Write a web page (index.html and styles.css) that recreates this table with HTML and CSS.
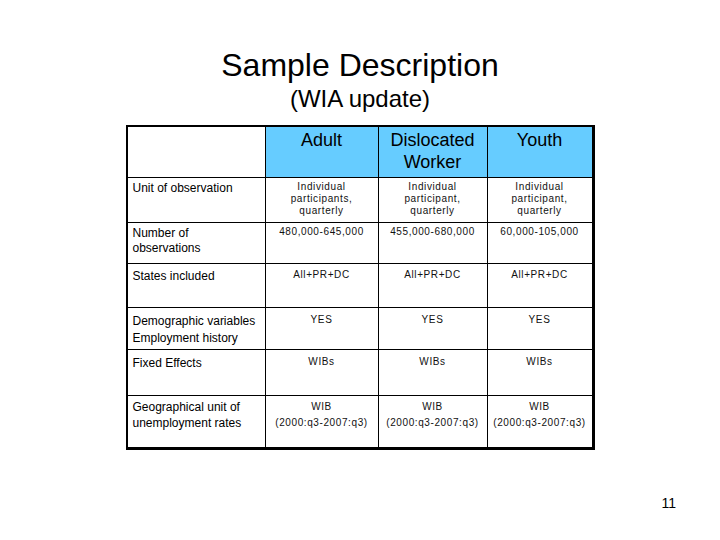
FILE: index.html
```html
<!DOCTYPE html>
<html>
<head>
<meta charset="utf-8">
<link rel="stylesheet" href="styles.css">
</head>
<body>
<div class="slide">
  <h1 class="title">Sample Description</h1>
  <div class="subtitle">(WIA update)</div>
  <div class="grid">
    <div class="cell corner"></div>
    <div class="cell head">Adult</div>
    <div class="cell head">Dislocated<br>Worker</div>
    <div class="cell head">Youth</div>

    <div class="cell label">Unit of observation</div>
    <div class="cell data">Individual<br>participants,<br>quarterly</div>
    <div class="cell data">Individual<br>participant,<br>quarterly</div>
    <div class="cell data">Individual<br>participant,<br>quarterly</div>

    <div class="cell label">Number of<br>observations</div>
    <div class="cell data">480,000-645,000</div>
    <div class="cell data">455,000-680,000</div>
    <div class="cell data">60,000-105,000</div>

    <div class="cell label r3">States included</div>
    <div class="cell data r3">All+PR+DC</div>
    <div class="cell data r3">All+PR+DC</div>
    <div class="cell data r3">All+PR+DC</div>

    <div class="cell label r4">Demographic variables<br>Employment history</div>
    <div class="cell data r4d">YES</div>
    <div class="cell data r4d">YES</div>
    <div class="cell data r4d">YES</div>

    <div class="cell label r5">Fixed Effects</div>
    <div class="cell data r5">WIBs</div>
    <div class="cell data r5">WIBs</div>
    <div class="cell data r5">WIBs</div>

    <div class="cell label r6">Geographical unit of<br>unemployment rates</div>
    <div class="cell data r6">WIB<br>(2000:q3-2007:q3)</div>
    <div class="cell data r6">WIB<br>(2000:q3-2007:q3)</div>
    <div class="cell data r6">WIB<br>(2000:q3-2007:q3)</div>
  </div>
  <div class="pagenum">11</div>
</div>
</body>
</html>
```

FILE: styles.css
```css
html, body {
  margin: 0;
  padding: 0;
  background: #ffffff;
}

.slide {
  width: 720px;
  height: 540px;
  box-sizing: border-box;
  padding-top: 47px;
  font-family: "Liberation Sans", Arial, sans-serif;
  color: #000000;
  display: flex;
  flex-direction: column;
  align-items: center;
  overflow: hidden;
}

.title {
  margin: 0;
  font-size: 32px;
  line-height: 36px;
  font-weight: normal;
  text-align: center;
}

.subtitle {
  margin-top: 2px;
  font-size: 24px;
  line-height: 28px;
  text-align: center;
}

.grid {
  margin-top: 12px;
  display: grid;
  grid-template-columns: 137px 112px 108px 104px;
  grid-template-rows: 50px 44px 40px 43px 41px 45px 51px;
  gap: 1px;
  background: #000000;
  border-top: 2px solid #000000;
  border-left: 2px solid #000000;
  border-right: 3px solid #000000;
  border-bottom: 3px solid #000000;
}

.cell {
  background: #ffffff;
  box-sizing: border-box;
}

.head {
  background: #66ccff;
  text-align: center;
  font-size: 18px;
  line-height: 22px;
  padding-top: 2px;
}

.label {
  font-size: 12px;
  line-height: 15px;
  padding: 3px 0 0 5px;
}

.data {
  font-size: 10px;
  line-height: 12px;
  letter-spacing: 0.6px;
  text-align: center;
  padding-top: 3px;
  color: #111111;
}

.label.r3,
.data.r3 {
  padding-top: 5px;
}

.r4 {
  line-height: 17px;
  padding-top: 5px;
}

.r4d {
  padding-top: 6px;
}

.label.r5,
.data.r5 {
  padding-top: 6px;
}

.r6 {
  line-height: 16px;
}

.pagenum {
  align-self: flex-end;
  margin-top: 45px;
  margin-right: 44px;
  font-size: 14px;
  line-height: 16px;
}
```
